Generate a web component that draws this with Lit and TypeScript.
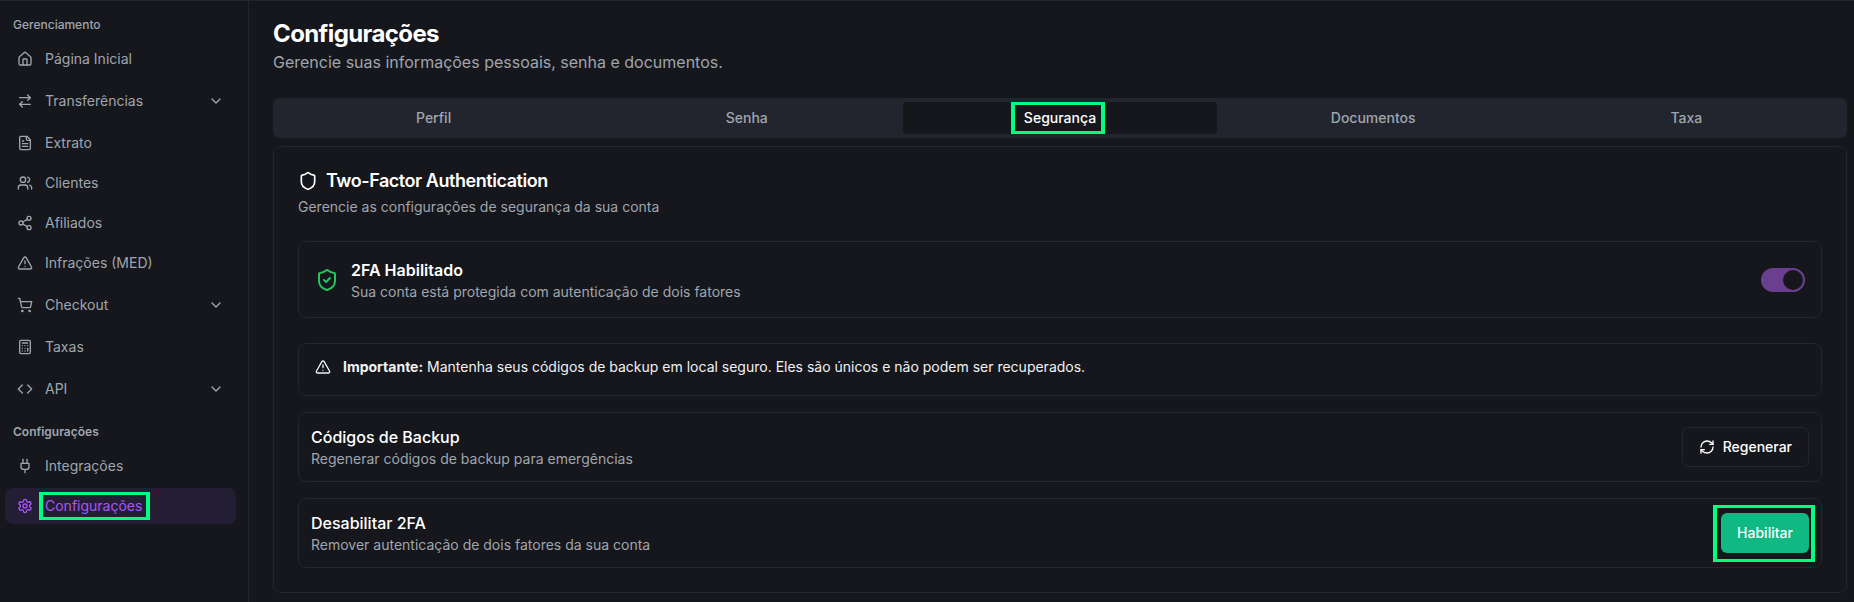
import { LitElement, html, css, svg } from 'lit';
import { customElement } from 'lit/decorators.js';

const ICONS: Record<string, unknown> = {
  house: svg`<path d="M15 21v-8a1 1 0 0 0-1-1h-4a1 1 0 0 0-1 1v8"/><path d="M3 10a2 2 0 0 1 .709-1.528l7-5.999a2 2 0 0 1 2.582 0l7 5.999A2 2 0 0 1 21 10v9a2 2 0 0 1-2 2H5a2 2 0 0 1-2-2z"/>`,
  arrows: svg`<path d="m16 3 4 4-4 4"/><path d="M20 7H4"/><path d="m8 21-4-4 4-4"/><path d="M4 17h16"/>`,
  file: svg`<path d="M15 2H6a2 2 0 0 0-2 2v16a2 2 0 0 0 2 2h12a2 2 0 0 0 2-2V7Z"/><path d="M14 2v4a2 2 0 0 0 2 2h4"/><path d="M10 9H8"/><path d="M16 13H8"/><path d="M16 17H8"/>`,
  users: svg`<path d="M16 21v-2a4 4 0 0 0-4-4H6a4 4 0 0 0-4 4v2"/><circle cx="9" cy="7" r="4"/><path d="M22 21v-2a4 4 0 0 0-3-3.87"/><path d="M16 3.13a4 4 0 0 1 0 7.75"/>`,
  share: svg`<circle cx="18" cy="5" r="3"/><circle cx="6" cy="12" r="3"/><circle cx="18" cy="19" r="3"/><line x1="8.59" x2="15.42" y1="13.51" y2="17.49"/><line x1="15.41" x2="8.59" y1="6.51" y2="10.49"/>`,
  alert: svg`<path d="m21.73 18-8-14a2 2 0 0 0-3.48 0l-8 14A2 2 0 0 0 4 21h16a2 2 0 0 0 1.73-3"/><path d="M12 9v4"/><path d="M12 17h.01"/>`,
  cart: svg`<circle cx="8" cy="21" r="1"/><circle cx="19" cy="21" r="1"/><path d="M2.05 2.05h2l2.66 12.42a2 2 0 0 0 2 1.58h9.78a2 2 0 0 0 1.95-1.57l1.65-7.43H5.12"/>`,
  calc: svg`<rect width="16" height="20" x="4" y="2" rx="2"/><line x1="8" x2="16" y1="6" y2="6"/><line x1="16" x2="16" y1="14" y2="18"/><path d="M16 10h.01"/><path d="M12 10h.01"/><path d="M8 10h.01"/><path d="M12 14h.01"/><path d="M8 14h.01"/><path d="M12 18h.01"/><path d="M8 18h.01"/>`,
  code: svg`<polyline points="16 18 22 12 16 6"/><polyline points="8 6 2 12 8 18"/>`,
  plug: svg`<path d="M12 22v-5"/><path d="M9 8V2"/><path d="M15 8V2"/><path d="M18 8v5a4 4 0 0 1-4 4h-4a4 4 0 0 1-4-4V8Z"/>`,
  gear: svg`<path d="M12.22 2h-.44a2 2 0 0 0-2 2v.18a2 2 0 0 1-1 1.73l-.43.25a2 2 0 0 1-2 0l-.15-.08a2 2 0 0 0-2.73.73l-.22.38a2 2 0 0 0 .73 2.73l.15.1a2 2 0 0 1 1 1.72v.51a2 2 0 0 1-1 1.74l-.15.09a2 2 0 0 0-.73 2.73l.22.38a2 2 0 0 0 2.73.73l.15-.08a2 2 0 0 1 2 0l.43.25a2 2 0 0 1 1 1.73V20a2 2 0 0 0 2 2h.44a2 2 0 0 0 2-2v-.18a2 2 0 0 1 1-1.73l.43-.25a2 2 0 0 1 2 0l.15.08a2 2 0 0 0 2.73-.73l.22-.39a2 2 0 0 0-.73-2.73l-.15-.08a2 2 0 0 1-1-1.74v-.5a2 2 0 0 1 1-1.74l.15-.09a2 2 0 0 0 .73-2.73l-.22-.38a2 2 0 0 0-2.73-.73l-.15.08a2 2 0 0 1-2 0l-.43-.25a2 2 0 0 1-1-1.73V4a2 2 0 0 0-2-2z"/><circle cx="12" cy="12" r="3"/>`,
  chevron: svg`<path d="m6 9 6 6 6-6"/>`,
  shield: svg`<path d="M20 13c0 5-3.5 7.5-7.66 8.95a1 1 0 0 1-.67-.01C7.5 20.5 4 18 4 13V6a1 1 0 0 1 1-1c2 0 4.5-1.2 6.24-2.72a1.17 1.17 0 0 1 1.52 0C14.51 3.81 17 5 19 5a1 1 0 0 1 1 1z"/>`,
  shieldCheck: svg`<path d="M20 13c0 5-3.5 7.5-7.66 8.95a1 1 0 0 1-.67-.01C7.5 20.5 4 18 4 13V6a1 1 0 0 1 1-1c2 0 4.5-1.2 6.24-2.72a1.17 1.17 0 0 1 1.52 0C14.51 3.81 17 5 19 5a1 1 0 0 1 1 1z"/><path d="m9 12 2 2 4-4"/>`,
  refresh: svg`<path d="M3 12a9 9 0 0 1 9-9 9.75 9.75 0 0 1 6.74 2.74L21 8"/><path d="M21 3v5h-5"/><path d="M21 12a9 9 0 0 1-9 9 9.75 9.75 0 0 1-6.74-2.74L3 16"/><path d="M8 16H3v5"/>`,
};

const icon = (name: string, size = 16) => html`<svg
  class="icon"
  width=${size}
  height=${size}
  viewBox="0 0 24 24"
  fill="none"
  stroke="currentColor"
  stroke-width="2"
  stroke-linecap="round"
  stroke-linejoin="round"
>${ICONS[name]}</svg>`;

const MANAGE = [
  { label: 'Página Inicial', icon: 'house' },
  { label: 'Transferências', icon: 'arrows', more: true },
  { label: 'Extrato', icon: 'file' },
  { label: 'Clientes', icon: 'users' },
  { label: 'Afiliados', icon: 'share' },
  { label: 'Infrações (MED)', icon: 'alert' },
  { label: 'Checkout', icon: 'cart', more: true },
  { label: 'Taxas', icon: 'calc' },
  { label: 'API', icon: 'code', more: true },
];

const TABS = ['Perfil', 'Senha', 'Segurança', 'Documentos', 'Taxa'];

@customElement('app-root')
export class AppRoot extends LitElement {
  static styles = css`
    :host {
      display: block;
      height: 602px;
      overflow: hidden;
      background: #15171c;
      color: #fff;
      font-family: Inter, "Noto Sans", sans-serif;
      font-size: 14px;
      line-height: 20px;
    }
    .icon {
      display: block;
      flex: none;
    }
    .page {
      display: flex;
      height: 602px;
      box-sizing: border-box;
      border-top: 1px solid #22252c;
    }

    .sidebar {
      box-sizing: border-box;
      flex: none;
      width: 249px;
      padding: 16px 12px 0 5px;
      border-right: 1px solid #23262d;
    }
    .group-label {
      margin-left: 8px;
      font-size: 12px;
      line-height: 16px;
      font-weight: 500;
      color: #a0a5ae;
    }
    .group-label.second {
      margin-top: 13px;
      font-weight: 600;
    }
    .nav {
      display: flex;
      flex-direction: column;
      margin-top: 6px;
    }
    .nav-item {
      display: flex;
      align-items: center;
      gap: 12px;
      height: 36px;
      margin: 2px 0;
      padding: 0 12px;
      border-radius: 8px;
      color: #a0a5ae;
    }
    .nav-item.more {
      margin: 4px 0;
    }
    .nav-item .chevron {
      margin-left: auto;
    }
    .nav-item.active {
      background: #241e34;
      color: #a855f7;
    }

    .marked {
      position: relative;
      display: inline-block;
    }
    .mark {
      position: absolute;
      border-style: solid;
      border-color: #00ff80;
      border-width: 3px 4px;
      pointer-events: none;
    }
    .mark.nav-mark {
      left: -6px;
      right: -8px;
      top: -4px;
      bottom: -4px;
    }
    .mark.tab-mark {
      left: -13px;
      right: -9px;
      top: -6px;
      bottom: -6px;
    }
    .mark.btn-mark {
      left: -8px;
      right: -6px;
      top: -8px;
      bottom: -9px;
    }

    .main {
      flex: 1;
      min-width: 0;
      padding: 17px 7px 0 24px;
    }
    h1 {
      margin: 0;
      font-size: 24px;
      line-height: 32px;
      font-weight: 700;
      letter-spacing: -0.6px;
    }
    .subtitle {
      margin: 0;
      font-size: 16px;
      line-height: 24px;
      color: #a0a5ae;
    }

    .tabs {
      display: grid;
      grid-template-columns: repeat(5, 1fr);
      margin-top: 24px;
      padding: 4px;
      border-radius: 6px;
      background: #22252d;
    }
    .tab {
      display: flex;
      align-items: center;
      justify-content: center;
      height: 32px;
      border-radius: 4px;
      font-weight: 500;
      color: #a0a5ae;
    }
    .tab.active {
      background: #15171c;
      color: #fff;
    }

    .card {
      box-sizing: border-box;
      height: 447px;
      margin-top: 8px;
      padding: 20px 24px 0;
      border: 1px solid #23262d;
      border-radius: 8px;
    }
    .card-title {
      display: flex;
      align-items: center;
      gap: 8px;
      font-size: 18px;
      line-height: 28px;
      font-weight: 600;
      letter-spacing: -0.45px;
    }
    .card-sub {
      margin-top: 2px;
      color: #a0a5ae;
    }

    .box {
      box-sizing: border-box;
      display: flex;
      align-items: center;
      border: 1px solid #23262d;
      border-radius: 8px;
    }
    .status {
      gap: 12px;
      height: 77px;
      margin-top: 24px;
      padding: 0 16px;
    }
    .status .icon {
      color: #22c55e;
    }
    .status .row-title {
      font-weight: 600;
    }
    .notice {
      gap: 12px;
      height: 53px;
      margin-top: 25px;
      padding: 0 16px 5px;
      color: #f1f2f4;
    }
    .notice strong {
      font-weight: 700;
    }
    .action {
      justify-content: space-between;
      height: 70px;
      margin-top: 16px;
      padding: 0 12px 1px;
    }
    .row-title {
      font-size: 16px;
      line-height: 24px;
      font-weight: 500;
    }
    .row-sub {
      color: #a0a5ae;
    }
    .status .text {
      flex: 1;
    }

    .toggle {
      display: flex;
      justify-content: flex-end;
      box-sizing: border-box;
      width: 44px;
      height: 24px;
      padding: 2px;
      border-radius: 12px;
      background: #6b3f8f;
    }
    .thumb {
      width: 20px;
      height: 20px;
      border-radius: 50%;
      background: #15171c;
    }

    button {
      display: flex;
      align-items: center;
      justify-content: center;
      gap: 8px;
      box-sizing: border-box;
      height: 40px;
      border-radius: 6px;
      font: inherit;
      font-weight: 500;
      color: #fff;
    }
    .outline {
      padding: 0 16px;
      border: 1px solid #23262d;
      background: #15171c;
    }
    .solid {
      width: 88px;
      border: 0;
      background: #10b981;
    }
  `;

  private renderNavItem(item: { label: string; icon: string; more?: boolean }) {
    return html`<div class="nav-item ${item.more ? 'more' : ''}">
      ${icon(item.icon)}
      <span>${item.label}</span>
      ${item.more ? html`<span class="chevron">${icon('chevron')}</span>` : ''}
    </div>`;
  }

  render() {
    return html`
      <div class="page">
        <aside class="sidebar">
          <div class="group-label">Gerenciamento</div>
          <nav class="nav">${MANAGE.map((i) => this.renderNavItem(i))}</nav>
          <div class="group-label second">Configurações</div>
          <nav class="nav">
            ${this.renderNavItem({ label: 'Integrações', icon: 'plug' })}
            <div class="nav-item active">
              ${icon('gear')}
              <span class="marked">Configurações<span class="mark nav-mark"></span></span>
            </div>
          </nav>
        </aside>

        <main class="main">
          <h1>Configurações</h1>
          <p class="subtitle">Gerencie suas informações pessoais, senha e documentos.</p>

          <div class="tabs">
            ${TABS.map((t) =>
              t === 'Segurança'
                ? html`<div class="tab active">
                    <span class="marked">${t}<span class="mark tab-mark"></span></span>
                  </div>`
                : html`<div class="tab">${t}</div>`,
            )}
          </div>

          <section class="card">
            <div class="card-title">${icon('shield', 20)}Two-Factor Authentication</div>
            <div class="card-sub">Gerencie as configurações de segurança da sua conta</div>

            <div class="box status">
              ${icon('shieldCheck', 24)}
              <div class="text">
                <div class="row-title">2FA Habilitado</div>
                <div class="row-sub">Sua conta está protegida com autenticação de dois fatores</div>
              </div>
              <div class="toggle"><div class="thumb"></div></div>
            </div>

            <div class="box notice">
              ${icon('alert')}
              <div>
                <strong>Importante:</strong> Mantenha seus códigos de backup em local seguro. Eles são
                únicos e não podem ser recuperados.
              </div>
            </div>

            <div class="box action">
              <div>
                <div class="row-title">Códigos de Backup</div>
                <div class="row-sub">Regenerar códigos de backup para emergências</div>
              </div>
              <button class="outline">${icon('refresh')}Regenerar</button>
            </div>

            <div class="box action">
              <div>
                <div class="row-title">Desabilitar 2FA</div>
                <div class="row-sub">Remover autenticação de dois fatores da sua conta</div>
              </div>
              <span class="marked">
                <button class="solid">Habilitar</button>
                <span class="mark btn-mark"></span>
              </span>
            </div>
          </section>
        </main>
      </div>
    `;
  }
}
